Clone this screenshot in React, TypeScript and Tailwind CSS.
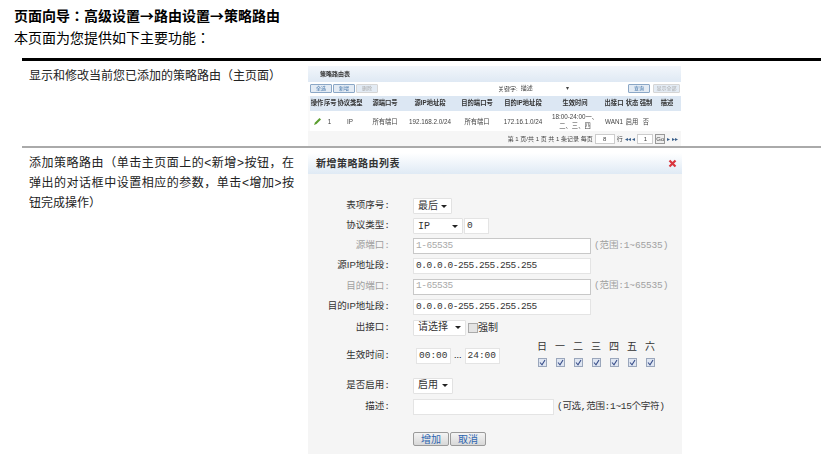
const sans = "font-['Liberation_Sans','Noto_Sans_CJK_JP',sans-serif]"
const mono = "font-['Liberation_Mono','Noto_Sans_CJK_JP',monospace]"
const cjkFirst = "font-['Noto_Sans_CJK_JP',sans-serif]"

const columns = [
  { label: "操作", width: "w-[14px]" },
  { label: "序号", width: "w-[11px]" },
  { label: "协议类型", width: "w-[30px]" },
  { label: "源端口号", width: "w-[40px]" },
  { label: "源IP地址段", width: "w-[50px]" },
  { label: "目的端口号", width: "w-[44px]" },
  { label: "目的IP地址段", width: "w-[48px]" },
  { label: "生效时间", width: "w-[56px]" },
  { label: "出接口", width: "w-[22px]" },
  { label: "状态", width: "w-[14px]" },
  { label: "强制", width: "w-[14px]" },
  { label: "描述", width: "w-[28px]" },
]

const row = ["", "1", "IP", "所有端口", "192.168.2.0/24", "所有端口", "172.16.1.0/24", "18:00-24:00一、\n二、三、四", "WAN1", "启用", "否", ""]

const days = ["日", "一", "二", "三", "四", "五", "六"]

function TinyButton({ label, dim, width = "w-[22px]" }: { label: string; dim?: boolean; width?: string }) {
  return (
    <span className={`${width} flex h-[9px] items-center justify-center rounded-[1px] border bg-[#e3ebf4] text-[5px] leading-none ${dim ? "border-[#d5d5d5] text-[#aaaaaa]" : "border-[#8ba7c6] text-[#3a6ea5]"}`}>
      {label}
    </span>
  )
}

function PolicyTable() {
  return (
    <div className="mt-[5px] flex h-[80px] w-[373px] flex-col bg-[#fafafa] text-[6px] leading-none text-[#444444] blur-[0.3px]">
      <div className="flex h-[16px] items-center bg-gradient-to-b from-[#f2f6fb] to-[#dfe9f4] pl-[12px] font-bold text-[#333333]">
        策略路由表
      </div>
      <div className="flex h-[14px] items-start gap-[1px] bg-white pt-[2px] pl-[2px] pr-[1px]">
        <TinyButton label="全选" />
        <TinyButton label="新增" />
        <TinyButton label="删除" dim />
        <span className="ml-[119px] mr-[2px] mt-[2px]">关键字:</span>
        <span className="mt-[1px] flex w-[50px] justify-between pr-[2px]">描述<span>▾</span></span>
        <span className="ml-auto flex gap-[3px]">
          <TinyButton label="查询" />
          <TinyButton label="显示全部" dim width="w-[27px]" />
        </span>
      </div>
      <div className="ml-[2px] flex h-[15px] items-center bg-[#dce7f3] text-[6.3px] font-bold text-[#333333]">
        {columns.map((c) => (
          <span key={c.label} className={`${c.width} shrink-0 whitespace-nowrap text-center`}>{c.label}</span>
        ))}
      </div>
      <div className="ml-[2px] flex h-[20px] items-center bg-white text-[6.3px] leading-[9px]">
        {columns.map((c, i) => (
          <span key={c.label} className={`${c.width} flex shrink-0 justify-center whitespace-pre-line text-center`}>
            {i === 0 ? (
              <svg width="9" height="9" viewBox="0 0 9 9">
                <path d="M1 8 L2 5.5 L6.5 1 L8 2.5 L3.5 7 Z" fill="#5a9e2f" />
              </svg>
            ) : row[i]}
          </span>
        ))}
      </div>
      <div className="flex h-[15px] flex-1 items-center justify-end gap-[2px] bg-[#f6f6f6] pr-[3px]">
        <span>第 1 页/共 1 页 共 1 条记录 每页</span>
        <span className="flex h-[10px] w-[20px] items-center justify-center border border-[#cccccc] bg-white">8</span>
        <span>行</span>
        <span className="text-[#3a5f8a]">◂◂ ◂</span>
        <span className="flex h-[10px] w-[16px] items-center justify-center border border-[#cccccc] bg-white">1</span>
        <span className="flex h-[10px] w-[10px] items-center justify-center border border-[#999999] bg-[#eeeeee]">Go</span>
        <span className="text-[#3a5f8a]">▸ ▸▸</span>
      </div>
    </div>
  )
}

function Select({ label, width }: { label: string; width: string }) {
  return (
    <span className={`${width} flex h-[16px] items-center justify-between rounded-[1px] border border-[#e2e2e2] bg-white pl-[4px] pr-[4px] text-[10px] text-[#333333]`}>
      <span className={mono}>{label}</span>
      <span className="h-0 w-0 border-x-[3px] border-t-[3px] border-x-transparent border-t-[#222222]" />
    </span>
  )
}

function TextBox({ value, disabled, width, tight = true }: { value: string; disabled?: boolean; width: string; tight?: boolean }) {
  return (
    <span className={`${width} ${mono} ${tight ? "tracking-[-0.45px]" : ""} flex h-[16px] items-center border px-[2px] text-[9.5px] ${disabled ? "border-[#c8c8c8] bg-white text-[#a8a8a8]" : "border-[#e4e4e4] bg-white text-[#333333]"}`}>
      {value}
    </span>
  )
}

function FormRow({ label, disabled, height, children }: { label: string; disabled?: boolean; height: string; children: React.ReactNode }) {
  return (
    <div className={`${height} flex items-center`}>
      <span className={`w-[82px] shrink-0 whitespace-nowrap text-right text-[9.5px] ${disabled ? "text-[#a0a0a0]" : "text-[#333333]"}`}>
        {label}<span className={mono}>:</span>
      </span>
      <div className="ml-[23px] flex items-center">{children}</div>
    </div>
  )
}

function Hint({ text }: { text: string }) {
  return <span className={`${mono} ml-[3px] whitespace-nowrap text-[9.5px] tracking-[-0.15px] text-[#a0a0a0]`}>{text}</span>
}

function Check() {
  return (
    <span className="flex h-[9px] w-[9px] items-center justify-center border border-[#9aa6bb] bg-[#dfe6f2]">
      <svg width="7" height="7" viewBox="0 0 7 7">
        <path d="M1 3.5 L3 5.8 L6 1" fill="none" stroke="#3a4f8a" strokeWidth="1.1" />
      </svg>
    </span>
  )
}

function FormButton({ label }: { label: string }) {
  return (
    <span className="flex h-[14px] w-[36px] items-center justify-center rounded-[2px] border border-[#9a9a9a] bg-gradient-to-b from-[#f4f4f4] to-[#d8d8d8] text-[10px] text-[#2f66b0]">
      {label}
    </span>
  )
}

function PolicyDialog() {
  return (
    <div className="mt-[5px] h-[301px] w-[374px] bg-[#f5f5f5]">
      <div className="flex h-[21px] items-center justify-between bg-gradient-to-b from-white to-[#dfeaf5] pl-[8px] pr-[5px]">
        <span className="text-[10px] font-bold tracking-[0.5px] text-[#333333]">新增策略路由列表</span>
        <svg width="9" height="9" viewBox="0 0 9 9">
          <path d="M1.5 1.5 L7.5 7.5 M7.5 1.5 L1.5 7.5" stroke="#d9363e" strokeWidth="2.2" />
        </svg>
      </div>
      <div className="pt-[22px]">
        <FormRow label="表项序号" height="h-[20px]"><Select label="最后" width="w-[39px]" /></FormRow>
        <FormRow label="协议类型" height="h-[20px]">
          <Select label="IP" width="w-[50px]" />
          <span className="ml-[1px]"><TextBox value="0" width="w-[25px]" /></span>
        </FormRow>
        <FormRow label="源端口" disabled height="h-[20px]">
          <TextBox value="1-65535" disabled width="w-[178px]" />
          <Hint text="(范围:1~65535)" />
        </FormRow>
        <FormRow label="源IP地址段" height="h-[20px]">
          <TextBox value="0.0.0.0-255.255.255.255" width="w-[178px]" />
        </FormRow>
        <FormRow label="目的端口" disabled height="h-[21px]">
          <TextBox value="1-65535" disabled width="w-[178px]" />
          <Hint text="(范围:1~65535)" />
        </FormRow>
        <FormRow label="目的IP地址段" height="h-[20px]">
          <TextBox value="0.0.0.0-255.255.255.255" width="w-[178px]" />
        </FormRow>
        <FormRow label="出接口" height="h-[21px]">
          <Select label="请选择" width="w-[53px]" />
          <span className="ml-[2px] h-[10px] w-[10px] border border-[#aaaaaa] bg-[#e4e4e4]" />
          <span className="text-[10px] text-[#333333]">强制</span>
        </FormRow>
        <FormRow label="生效时间" height="h-[36px]">
          <span className="ml-[3px]"><TextBox value="00:00" width="w-[35px]" tight={false} /></span>
          <span className="mx-[3px] text-[9px]">...</span>
          <TextBox value="24:00" width="w-[35px]" tight={false} />
          <div className="ml-[38px] flex -translate-y-[2px] gap-[9px]">
            {days.map((d) => (
              <div key={d} className="flex w-[9px] flex-col items-center gap-[5px]">
                <span className="whitespace-nowrap text-[10px] leading-[12px] text-[#333333]">{d}</span>
                <Check />
              </div>
            ))}
          </div>
        </FormRow>
        <FormRow label="是否启用" height="h-[23px]"><Select label="启用" width="w-[40px]" /></FormRow>
        <FormRow label="描述" height="h-[20px]">
          <TextBox value="" width="w-[141px]" />
          <span className={`${mono} ml-[3px] whitespace-nowrap text-[9.5px] tracking-[-0.3px] text-[#333333]`}>(可选,范围:1~15个字符)</span>
        </FormRow>
        <div className="ml-[105px] mt-[15px] flex gap-[1px]">
          <FormButton label="增加" />
          <FormButton label="取消" />
        </div>
      </div>
    </div>
  )
}

export default function App() {
  return (
    <div className={`${sans} h-[454px] w-[838px] overflow-hidden bg-white pl-[14px] text-black [text-spacing-trim:space-all]`}>
      <h1 className={`${cjkFirst} pt-[7px] text-[14px] leading-[16px] font-bold`}>
        页面向导：高级设置→路由设置→策略路由
      </h1>
      <p className="mt-[7px] text-[14px] leading-[16px]">本页面为您提供如下主要功能：</p>
      <div className="mt-[12px] ml-[8px] w-[799px] border-t-[3px] border-black">
        <div className="flex h-[87px] border-b-2 border-[#aaaaaa]">
          <p className="w-[286px] shrink-0 pt-[5px] pl-[7px] pr-[14px] text-justify text-[12px] leading-[20px] text-[#222222]">
            显示和修改当前您已添加的策略路由（主页面）
          </p>
          <PolicyTable />
        </div>
        <div className="flex">
          <p className="w-[286px] shrink-0 pt-[5px] pl-[7px] pr-[14px] text-justify text-[12px] leading-[20px] text-[#222222]">
            添加策略路由（单击主页面上的&lt;新增&gt;按钮，在弹出的对话框中设置相应的参数，单击&lt;增加&gt;按钮完成操作）
          </p>
          <PolicyDialog />
        </div>
      </div>
    </div>
  )
}
